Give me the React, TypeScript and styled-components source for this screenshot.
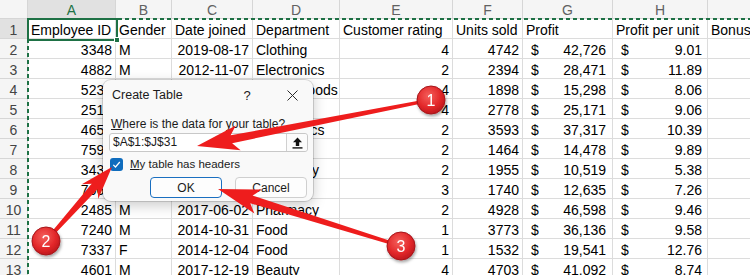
import React from 'react';
import styled, { createGlobalStyle } from 'styled-components';

const GlobalStyle = createGlobalStyle`
  html, body { margin: 0; padding: 0; background: #ffffff; overflow: hidden; }
  * { box-sizing: border-box; }
`;

const FONT = `'Liberation Sans', Arial, sans-serif`;
const GREEN = '#1e7145';

const Page = styled.div`
  position: relative;
  width: 750px;
  height: 275px;
  overflow: hidden;
  font-family: ${FONT};
  background: #ffffff;
`;

const Sheet = styled.div`
  display: grid;
  width: 820px;
  grid-template-columns: 28px 88px 56px 81px 87px 113px 70px 90px 95px 112px;
  grid-template-rows: 19px;
  grid-auto-rows: 20px;
`;

const ColHeader = styled.div<{ $selected?: boolean }>`
  background: ${(p) => (p.$selected ? '#e1e1e1' : '#f5f5f5')};
  color: ${(p) => (p.$selected ? GREEN : '#616161')};
  border-right: 1px solid #d6d6d6;
  border-bottom: 1px solid #d6d6d6;
  font-size: 14px;
  line-height: 18px;
  padding-top: 1px;
  text-align: center;
  overflow: hidden;
`;

const RowHeader = styled.div<{ $selected?: boolean }>`
  background: ${(p) => (p.$selected ? '#e1e1e1' : '#f5f5f5')};
  color: #444444;
  border-right: 1px solid #d6d6d6;
  border-bottom: 1px solid #d6d6d6;
  font-size: 14px;
  line-height: 19px;
  padding-top: 2px;
  text-align: center;
  overflow: hidden;
`;

const Cell = styled.div<{ $align?: 'left' | 'right' }>`
  border-right: 1px solid #dcdcdc;
  border-bottom: 1px solid #dcdcdc;
  color: #000000;
  font-size: 14px;
  line-height: 19px;
  padding: 2px 3px 0 3px;
  text-align: ${(p) => (p.$align === 'right' ? 'right' : 'left')};
  white-space: nowrap;
  overflow: hidden;
`;

const MoneyCell = styled(Cell)<{ $right?: number }>`
  display: flex;
  justify-content: space-between;
  padding-left: 8px;
  padding-right: ${(p) => p.$right ?? 6}px;
`;

const RangeOutline = styled.div`
  position: absolute;
  left: 27px;
  top: 18px;
  right: 0;
  bottom: 0;
  background:
    repeating-linear-gradient(90deg, ${GREEN} 0 4px, transparent 4px 7px) top left / 100% 2px no-repeat,
    repeating-linear-gradient(180deg, ${GREEN} 0 4px, transparent 4px 7px) top left / 2px 100% no-repeat;
  pointer-events: none;
`;

const ActiveCell = styled.div`
  position: absolute;
  left: 27px;
  top: 18px;
  width: 91px;
  height: 23px;
  border: 2px solid ${GREEN};
  pointer-events: none;
`;

const FillHandle = styled.div`
  position: absolute;
  right: -4px;
  bottom: -4px;
  width: 6px;
  height: 6px;
  background: ${GREEN};
  border: 1px solid #ffffff;
`;

/* ---------- Dialog ---------- */

const Dialog = styled.div`
  position: absolute;
  left: 103px;
  top: 80px;
  width: 210px;
  height: 121px;
  background: #f9f9f9;
  border-radius: 8px;
  box-shadow: 0 0 0 1px rgba(0, 0, 0, 0.14), 0 4px 14px rgba(0, 0, 0, 0.22);
  display: flex;
  flex-direction: column;
  font-family: ${FONT};
  font-size: 12px;
  color: #1b1b1b;
`;

const TitleBar = styled.div`
  height: 30px;
  display: flex;
  align-items: center;
  padding: 0 11px 0 9px;
`;

const Title = styled.div`
  flex: 1;
  font-size: 12.5px;
`;

const HelpMark = styled.div`
  width: 14px;
  text-align: center;
  font-size: 13px;
  margin-right: 28px;
`;

const CloseButton = styled.div`
  width: 20px;
  height: 20px;
  display: flex;
  align-items: center;
  justify-content: center;
`;

const Body = styled.div`
  display: flex;
  flex-direction: column;
  padding: 0 5px 0 6px;
`;

const Prompt = styled.div`
  margin-top: 6px;
  padding-left: 2px;
  line-height: 16px;
`;

const RangeInput = styled.div`
  margin-top: 1px;
  height: 19px;
  display: flex;
  background: #ffffff;
  border: 1px solid #c8c8c8;
  border-radius: 3px;
`;

const RangeText = styled.div`
  flex: 1;
  padding-left: 3px;
  line-height: 17px;
  font-size: 12px;
`;

const CollapseButton = styled.div`
  width: 21px;
  display: flex;
  align-items: center;
  justify-content: center;
  border-left: 1px solid #d0d0d0;
  background: #fbfbfb;
  border-radius: 0 3px 3px 0;
`;

const CheckRow = styled.div`
  margin-top: 5px;
  height: 14px;
  display: flex;
  align-items: center;
  padding-left: 1px;
`;

const CheckBox = styled.div`
  width: 13px;
  height: 13px;
  border-radius: 3px;
  background: #0f6cbd;
  display: flex;
  align-items: center;
  justify-content: center;
  margin-right: 7px;
`;

const CheckLabel = styled.span`
  font-size: 11.5px;
`;

const ButtonRow = styled.div`
  margin-top: 6px;
  display: flex;
  justify-content: flex-end;
  gap: 13px;
  padding-right: 1px;
`;

const Button = styled.div<{ $default?: boolean }>`
  width: 72px;
  height: 21px;
  border-radius: 4px;
  background: #fdfdfd;
  border: ${(p) => (p.$default ? '1.5px solid #1a6fc0' : '1px solid #cfcfcf')};
  display: flex;
  align-items: center;
  justify-content: center;
  font-size: 12px;
`;

/* ---------- Annotation overlay ---------- */

const Overlay = styled.svg`
  position: absolute;
  left: 0;
  top: 0;
  pointer-events: none;
`;

type Pt = [number, number];

function arrowPoints(tail: Pt, tip: Pt, w0: number, w1: number, L: number, W: number): string {
  const [x0, y0] = tail;
  const [x1, y1] = tip;
  const dx = x1 - x0;
  const dy = y1 - y0;
  const len = Math.hypot(dx, dy);
  const ux = dx / len;
  const uy = dy / len;
  const nx = -uy;
  const ny = ux;
  const bx = x1 - ux * L;
  const by = y1 - uy * L;
  const kx = bx + ux * 7;
  const ky = by + uy * 7;
  const p = (x: number, y: number) => `${x.toFixed(1)},${y.toFixed(1)}`;
  return [
    p(x0 + (nx * w0) / 2, y0 + (ny * w0) / 2),
    p(kx + (nx * w1) / 2, ky + (ny * w1) / 2),
    p(bx + (nx * W) / 2, by + (ny * W) / 2),
    p(x1, y1),
    p(bx - (nx * W) / 2, by - (ny * W) / 2),
    p(kx - (nx * w1) / 2, ky - (ny * w1) / 2),
    p(x0 - (nx * w0) / 2, y0 - (ny * w0) / 2),
  ].join(' ');
}

const arrows: { tail: Pt; tip: Pt; L: number; W: number }[] = [
  { tail: [431, 100], tip: [197, 146], L: 42, W: 25 },
  { tail: [46, 241], tip: [112, 167], L: 33, W: 22 },
  { tail: [401, 246], tip: [218, 189], L: 42, W: 25 },
];

const badges: { c: Pt; n: string }[] = [
  { c: [431, 100], n: '1' },
  { c: [46, 241], n: '2' },
  { c: [401, 246], n: '3' },
];

const Annotations: React.FC = () => (
  <Overlay width={750} height={275} viewBox="0 0 750 275">
    <defs>
      <radialGradient id="badgeFill" cx="0.42" cy="0.35" r="0.7">
        <stop offset="0" stopColor="#f4605c" />
        <stop offset="0.6" stopColor="#e3282a" />
        <stop offset="1" stopColor="#b8151b" />
      </radialGradient>
      <filter id="shadow" x="-30%" y="-30%" width="160%" height="160%">
        <feDropShadow dx="1" dy="2" stdDeviation="1.6" floodColor="#000" floodOpacity="0.35" />
      </filter>
    </defs>
    {arrows.map((a, i) => (
      <polygon key={i} points={arrowPoints(a.tail, a.tip, 3, 8, a.L, a.W)} fill="#ee1d1d" />
    ))}
    {badges.map((b) => (
      <g key={b.n} filter="url(#shadow)">
        <circle cx={b.c[0]} cy={b.c[1]} r={14} fill="url(#badgeFill)" stroke="#a5141a" strokeWidth={1} />
        <text
          x={b.c[0]}
          y={b.c[1] + 5.5}
          textAnchor="middle"
          fontFamily={FONT}
          fontSize={16}
          fill="#ffffff"
        >
          {b.n}
        </text>
      </g>
    ))}
  </Overlay>
);

/* ---------- Data ---------- */

type Row = [string, string, string, string, string, string, string, string];

const rows: Row[] = [
  ['3348', 'M', '2019-08-17', 'Clothing', '4', '4742', '42,726', '9.01'],
  ['4882', 'M', '2012-11-07', 'Electronics', '2', '2394', '28,471', '11.89'],
  ['5231', 'F', '2016-03-22', 'Baked goods', '4', '1898', '15,298', '8.06'],
  ['2519', 'M', '2013-05-14', 'Food', '4', '2778', '25,171', '9.06'],
  ['4652', 'F', '2018-09-30', 'Electronics', '2', '3593', '37,317', '10.39'],
  ['7593', 'M', '2015-01-26', 'Beauty', '2', '1464', '14,478', '9.89'],
  ['3436', 'F', '2019-04-11', 'Pharmacy', '2', '1955', '10,519', '5.38'],
  ['7061', 'M', '2011-07-08', 'Clothing', '3', '1740', '12,635', '7.26'],
  ['2485', 'M', '2017-06-02', 'Pharmacy', '2', '4928', '46,598', '9.46'],
  ['7240', 'M', '2014-10-31', 'Food', '1', '3773', '36,136', '9.58'],
  ['7337', 'F', '2014-12-04', 'Food', '1', '1532', '19,541', '12.76'],
  ['4601', 'M', '2017-12-19', 'Beauty', '4', '4703', '41,092', '8.74'],
];

const letters = ['A', 'B', 'C', 'D', 'E', 'F', 'G', 'H', 'I'];
const headings = [
  'Employee ID',
  'Gender',
  'Date joined',
  'Department',
  'Customer rating',
  'Units sold',
  'Profit',
  'Profit per unit',
  'Bonus',
];

const App: React.FC = () => (
  <Page>
    <GlobalStyle />
    <Sheet>
      <ColHeader />
      {letters.map((l) => (
        <ColHeader key={l} $selected={l === 'A'}>
          {l}
        </ColHeader>
      ))}

      <RowHeader $selected>1</RowHeader>
      {headings.map((h) => (
        <Cell key={h}>{h}</Cell>
      ))}

      {rows.map((r, i) => (
        <React.Fragment key={i}>
          <RowHeader>{i + 2}</RowHeader>
          <Cell $align="right">{r[0]}</Cell>
          <Cell>{r[1]}</Cell>
          <Cell $align="right">{r[2]}</Cell>
          <Cell>{r[3]}</Cell>
          <Cell $align="right">{r[4]}</Cell>
          <Cell $align="right">{r[5]}</Cell>
          <MoneyCell $right={6}>
            <span>$</span>
            <span>{r[6]}</span>
          </MoneyCell>
          <MoneyCell $right={5}>
            <span>$</span>
            <span>{r[7]}</span>
          </MoneyCell>
          <Cell />
        </React.Fragment>
      ))}
    </Sheet>

    <RangeOutline />
    <ActiveCell>
      <FillHandle />
    </ActiveCell>

    <Dialog>
      <TitleBar>
        <Title>Create Table</Title>
        <HelpMark>?</HelpMark>
        <CloseButton>
          <svg width="11" height="11" viewBox="0 0 11 11">
            <path d="M0.5 0.5 L10.5 10.5 M10.5 0.5 L0.5 10.5" stroke="#2b2b2b" strokeWidth="1" fill="none" />
          </svg>
        </CloseButton>
      </TitleBar>
      <Body>
        <Prompt>
          <u>W</u>here is the data for your table?
        </Prompt>
        <RangeInput>
          <RangeText>$A$1:$J$31</RangeText>
          <CollapseButton>
            <svg width="11" height="12" viewBox="0 0 11 12">
              <path d="M5.5 0.5 L10 5.2 H7.2 V9 H3.8 V5.2 H1 Z" fill="#111" />
              <rect x="0.5" y="10.2" width="10" height="1.4" fill="#111" />
            </svg>
          </CollapseButton>
        </RangeInput>
        <CheckRow>
          <CheckBox>
            <svg width="9" height="9" viewBox="0 0 9 9">
              <path d="M1.3 4.8 L3.5 7 L7.8 2" stroke="#fff" strokeWidth="1.2" fill="none" />
            </svg>
          </CheckBox>
          <CheckLabel>
            <u>M</u>y table has headers
          </CheckLabel>
        </CheckRow>
        <ButtonRow>
          <Button $default>OK</Button>
          <Button>Cancel</Button>
        </ButtonRow>
      </Body>
    </Dialog>

    <Annotations />
  </Page>
);

export default App;
